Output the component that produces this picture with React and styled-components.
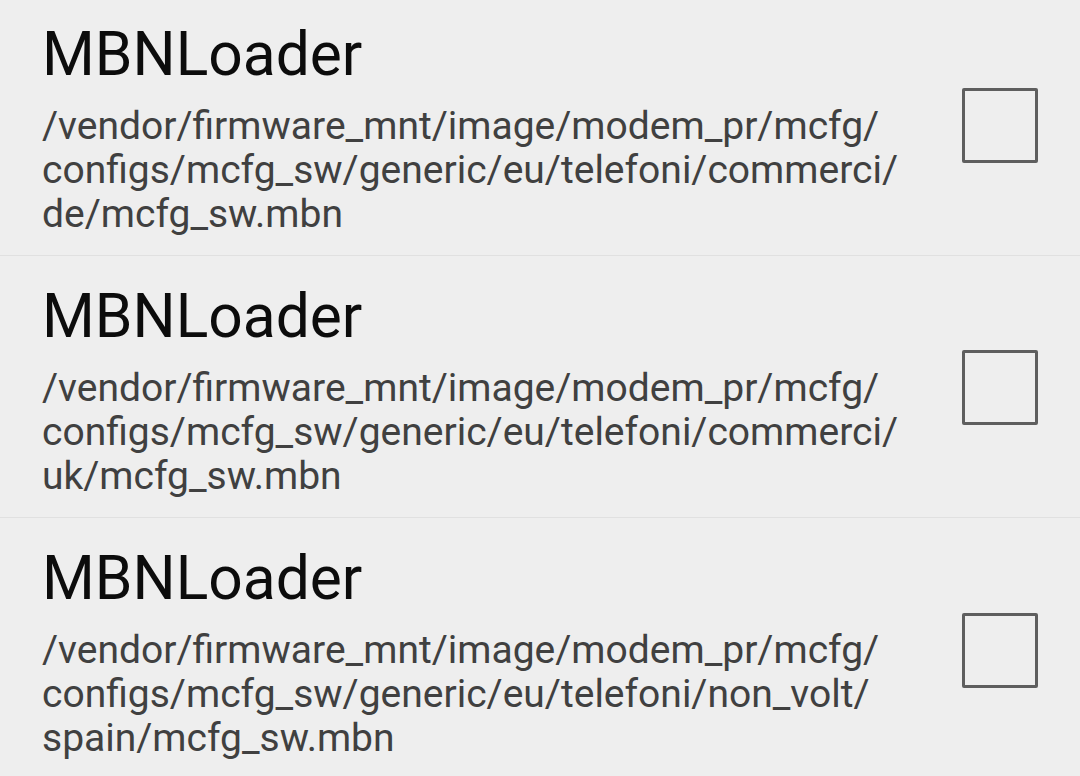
import React from "react";
import styled, { createGlobalStyle } from "styled-components";

const Global = createGlobalStyle`
  html, body {
    margin: 0;
    padding: 0;
    background: #eeeeee;
    overflow: hidden;
  }
  body {
    font-family: Roboto, "Noto Sans", "Liberation Sans", sans-serif;
  }
`;

const Screen = styled.div`
  width: 1080px;
  height: 776px;
  overflow: hidden;
  background: #eeeeee;
`;

const List = styled.div`
  display: flex;
  flex-direction: column;
  margin-top: -6px;
`;

const Row = styled.div`
  display: flex;
  align-items: center;
  height: 262px;
  box-sizing: border-box;
  padding: 0 42px;
  border-bottom: ${(p) => (p.$last ? "none" : "1px solid #e0e0e0")};
  gap: 24px;
`;

const TextBlock = styled.div`
  flex: 1;
  display: flex;
  flex-direction: column;
  padding-top: 9px;
  gap: 17px;
`;

const Title = styled.div`
  font-size: 60.5px;
  line-height: 64px;
  color: #0c0c0c;
`;

const Path = styled.div`
  font-size: 39px;
  line-height: 44px;
  color: #404040;
`;

const Box = styled.div`
  flex: none;
  width: 76px;
  height: 75px;
  margin-top: 2px;
  box-sizing: border-box;
  border: 3px solid #5e5e5e;
  border-radius: 2px;
`;

const items = [
  {
    lines: [
      "/vendor/firmware_mnt/image/modem_pr/mcfg/",
      "configs/mcfg_sw/generic/eu/telefoni/commerci/",
      "de/mcfg_sw.mbn",
    ],
  },
  {
    lines: [
      "/vendor/firmware_mnt/image/modem_pr/mcfg/",
      "configs/mcfg_sw/generic/eu/telefoni/commerci/",
      "uk/mcfg_sw.mbn",
    ],
  },
  {
    lines: [
      "/vendor/firmware_mnt/image/modem_pr/mcfg/",
      "configs/mcfg_sw/generic/eu/telefoni/non_volt/",
      "spain/mcfg_sw.mbn",
    ],
  },
];

export default function App() {
  return (
    <Screen>
      <Global />
      <List>
        {items.map((it, i) => (
          <Row key={i} $last={i === items.length - 1}>
            <TextBlock>
              <Title>MBNLoader</Title>
              <Path>
                {it.lines.map((l, j) => (
                  <div key={j}>{l}</div>
                ))}
              </Path>
            </TextBlock>
            <Box />
          </Row>
        ))}
      </List>
    </Screen>
  );
}
